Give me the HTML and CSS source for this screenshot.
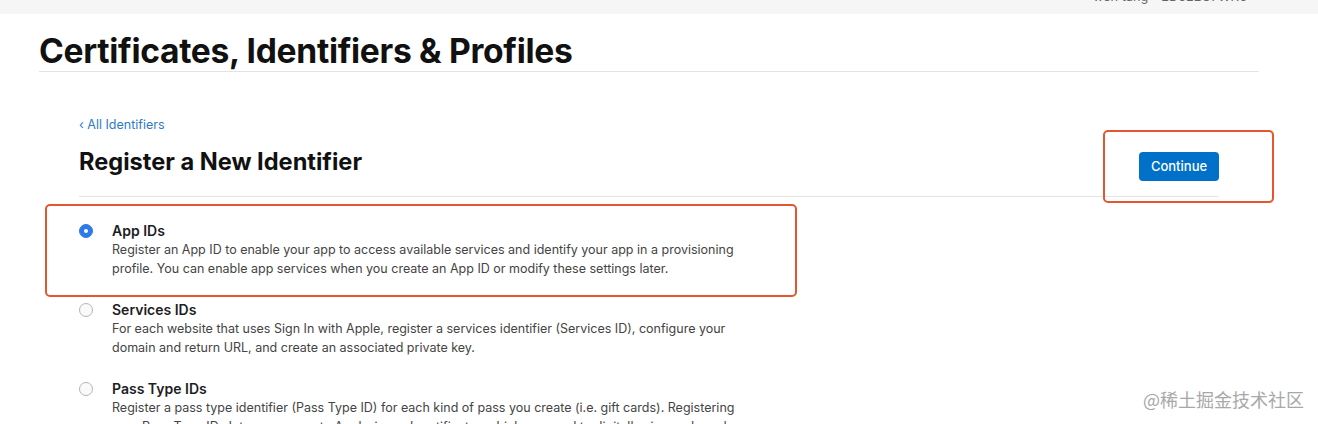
FILE: index.html
```html
<!DOCTYPE html>
<html>
<head>
<meta charset="utf-8">
<link rel="stylesheet" href="styles.css">
</head>
<body>
<div class="topbar"><span class="user">wen tang - 2D322G7WK6</span></div>
<div class="page">
  <header class="page-header">
    <h1 class="page-title">Certificates, Identifiers &amp; Profiles</h1>
  </header>
  <main class="content">
    <a class="back" href="#">‹ All Identifiers</a>
    <div class="section-head">
      <h2 class="section-title">Register a New Identifier</h2>
      <button class="btn-continue">Continue</button>
    </div>
    <ul class="options">
      <li class="option">
        <span class="radio checked"></span>
        <div class="option-text">
          <div class="option-title">App IDs</div>
          <div class="option-desc">Register an App ID to enable your app to access available services and identify your app in a provisioning profile. You can enable app services when you create an App ID or modify these settings later.</div>
        </div>
      </li>
      <li class="option">
        <span class="radio"></span>
        <div class="option-text">
          <div class="option-title">Services IDs</div>
          <div class="option-desc">For each website that uses Sign In with Apple, register a services identifier (Services ID), configure your domain and return URL, and create an associated private key.</div>
        </div>
      </li>
      <li class="option">
        <span class="radio"></span>
        <div class="option-text">
          <div class="option-title">Pass Type IDs</div>
          <div class="option-desc">Register a pass type identifier (Pass Type ID) for each kind of pass you create (i.e. gift cards). Registering your Pass Type IDs lets you generate Apple-issued certificates which are used to digitally sign and send updates to your passes, and allow your passes to be recognized by Wallet.</div>
        </div>
      </li>
    </ul>
  </main>
</div>
<div class="mark mark-option"></div>
<div class="mark mark-button"></div>
<div class="watermark">@稀土掘金技术社区</div>
</body>
</html>
```
FILE: styles.css
```css
* { box-sizing: border-box; }
html, body { margin: 0; padding: 0; }
body {
  background: #fff;
  font-family: Inter, "Liberation Sans", Arial, sans-serif;
  color: #1d1d1f;
  width: 1318px;
  height: 424px;
  overflow: hidden;
  position: relative;
}
.topbar {
  height: 14px;
  background: #f6f6f6;
  display: flex;
  justify-content: flex-end;
  padding-right: 71px;
  overflow: hidden;
}
.user {
  font-size: 12.7px;
  line-height: 14px;
  color: #666;
  margin-top: -10px;
}
.page {
  padding: 0 59px 0 39px;
}
.page-header {
  border-bottom: 1px solid #e3e3e3;
  padding-top: 17px;
  height: 58px;
}
.page-title {
  margin: 0;
  font-size: 33.6px;
  line-height: 40px;
  font-weight: 700;
  color: #111;
  letter-spacing: -0.3px;
}
.content {
  margin: 0 40px 0 40px;
}
.back {
  display: block;
  margin-top: 44px;
  font-size: 12.5px;
  line-height: 18px;
  color: #2f7bc4;
  text-decoration: none;
}
.section-head {
  display: flex;
  justify-content: space-between;
  align-items: center;
  border-bottom: 1px solid #e3e3e3;
  height: 63px;
  padding-bottom: 6px;
}
.section-title {
  margin: 0;
  font-size: 23.6px;
  line-height: 28px;
  font-weight: 700;
  color: #111;
}
.btn-continue {
  background: #0070c9;
  color: #fff;
  border: none;
  border-radius: 4px;
  font-family: inherit;
  font-size: 13px;
  font-weight: 500;
  width: 80px;
  height: 29px;
  padding: 0;
  margin-top: 8px;
}
.options {
  list-style: none;
  margin: 0;
  padding: 25px 0 0;
}
.option {
  display: flex;
  gap: 19px;
  height: 79px;
}
.radio {
  flex: none;
  width: 14px;
  height: 14px;
  border-radius: 50%;
  border: 1px solid #b5b5b5;
  background: #fafafa;
  margin-top: 2px;
  position: relative;
}
.radio.checked {
  background: #2d7be8;
  border-color: #2d7be8;
}
.radio.checked::after {
  content: "";
  position: absolute;
  left: 4px;
  top: 4px;
  width: 4px;
  height: 4px;
  border-radius: 50%;
  background: #fff;
}
.option-text { width: 640px; }
.option-title {
  font-size: 14px;
  line-height: 18px;
  font-weight: 600;
  color: #1d1d1f;
}
.option-desc {
  font-size: 12.5px;
  line-height: 19px;
  color: #444;
}
.mark {
  position: absolute;
  border: 2px solid #e4572e;
  border-radius: 5px;
}
.mark-option { left: 45px; top: 204px; width: 752px; height: 93px; }
.mark-button { left: 1103px; top: 130px; width: 171px; height: 73px; }
.watermark {
  position: absolute;
  left: 1143px;
  top: 388px;
  font-family: "Noto Sans CJK SC", sans-serif;
  font-size: 18px;
  line-height: 22px;
  color: #a8a8a8;
}
```
